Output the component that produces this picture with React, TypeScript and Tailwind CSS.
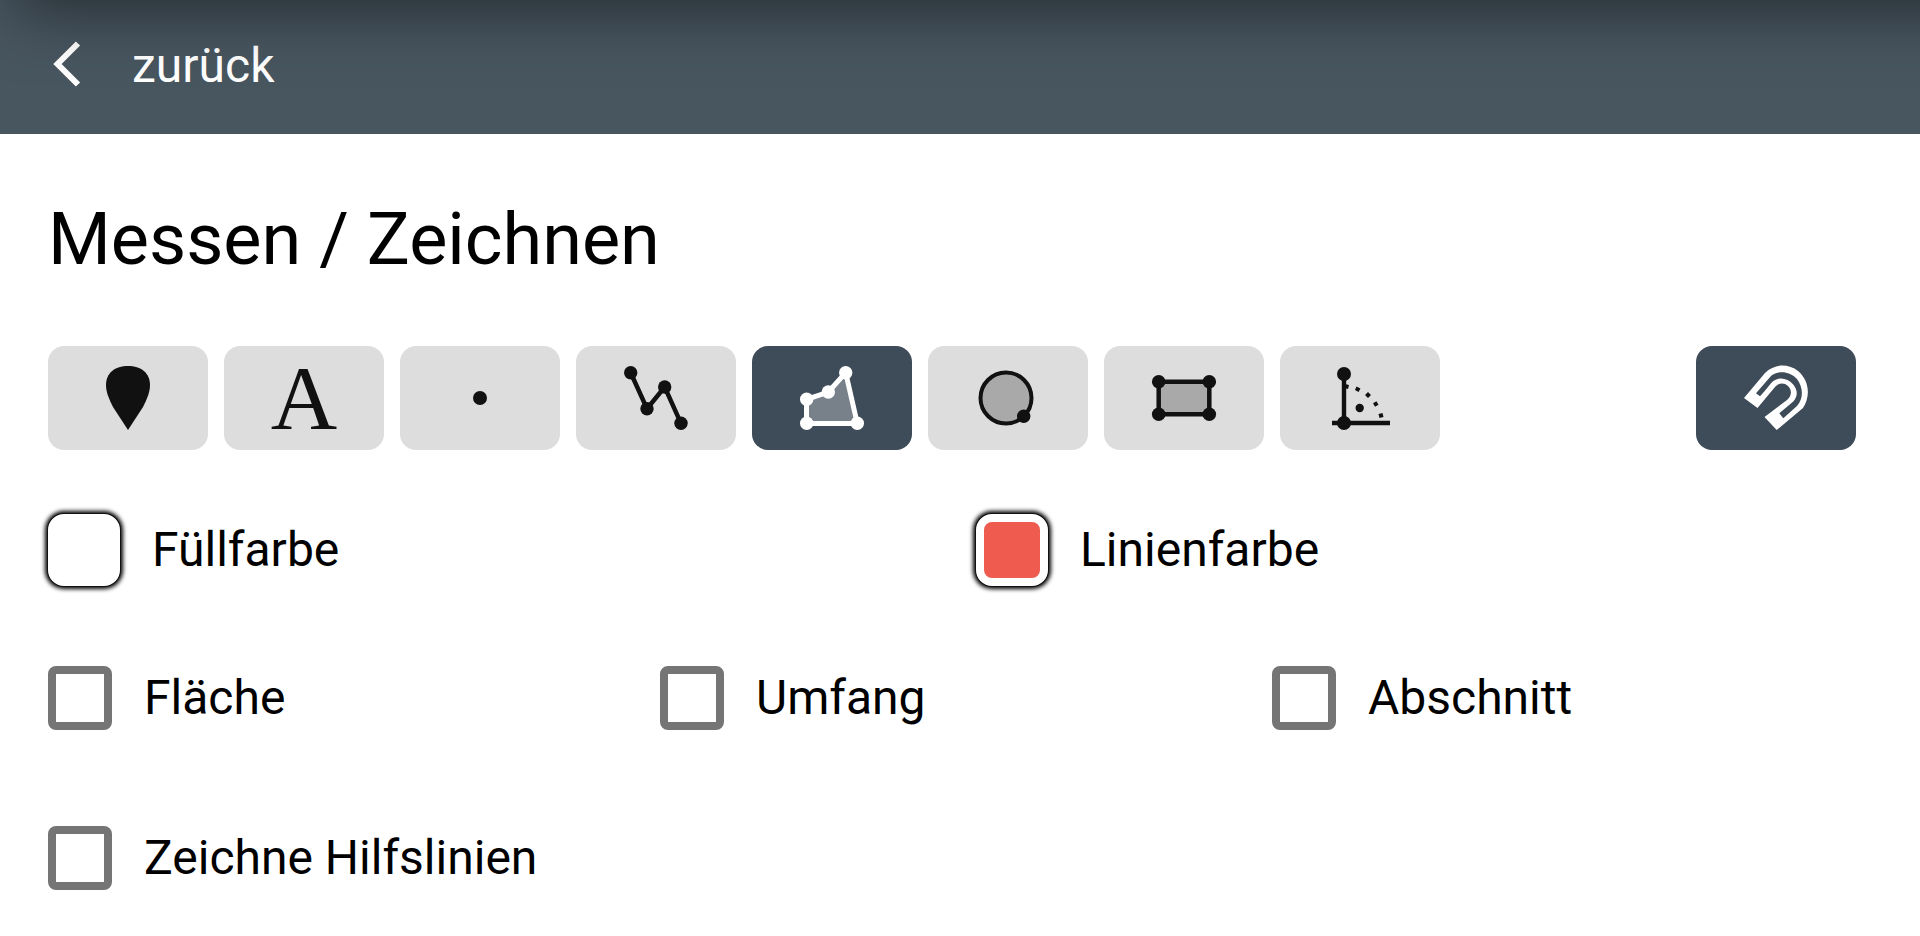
import { useState } from 'react';
import type { ReactNode } from 'react';

type Tool = { id: string; label: string; icon: ReactNode };

const TOOLS: Tool[] = [
  {
    id: 'marker',
    label: 'Marker',
    icon: <path fill="currentColor" d="M32 0C19 0 10 7 10 19c0 7 3 14 7 22l15 23 15-23c4-8 7-15 7-22C54 7 45 0 32 0z" />,
  },
  {
    id: 'text',
    label: 'Text',
    icon: (
      <text x="32" y="63" textAnchor="middle" fill="currentColor"
        className="font-['Liberation_Serif',serif] text-[92px]">A</text>
    ),
  },
  {
    id: 'point',
    label: 'Punkt',
    icon: <circle cx="32" cy="32" r="7" fill="currentColor" />,
  },
  {
    id: 'line',
    label: 'Linie',
    icon: (
      <g fill="currentColor">
        <path d="M6.7 6.7 23 42.7 40.7 21 57 57.3" fill="none" stroke="currentColor" strokeWidth="4.5" />
        <circle cx="6.7" cy="6.7" r="6.7" />
        <circle cx="23" cy="42.7" r="6.7" />
        <circle cx="40.7" cy="21" r="6.7" />
        <circle cx="57" cy="57.3" r="6.7" />
      </g>
    ),
  },
  {
    id: 'polygon',
    label: 'Polygon',
    icon: (
      <g fill="currentColor">
        <path d="M6.5 33.3 28.3 26 45.7 6.7 57.3 57.5H6.5z" fillOpacity=".3" stroke="currentColor" strokeWidth="5" />
        <circle cx="6.7" cy="33.3" r="6.7" />
        <circle cx="28.3" cy="26" r="6.7" />
        <circle cx="45.7" cy="6.7" r="6.7" />
        <circle cx="57.3" cy="57.3" r="6.7" />
        <circle cx="6.7" cy="57.3" r="6.7" />
      </g>
    ),
  },
  {
    id: 'circle',
    label: 'Kreis',
    icon: (
      <g fill="currentColor">
        <circle cx="30" cy="32" r="25.5" fillOpacity=".25" stroke="currentColor" strokeWidth="4" />
        <circle cx="47.7" cy="50.3" r="6.7" />
      </g>
    ),
  },
  {
    id: 'rect',
    label: 'Rechteck',
    icon: (
      <g fill="currentColor">
        <path d="M6.7 15.7h50.6v32.6H6.7z" fillOpacity=".25" stroke="currentColor" strokeWidth="4.5" />
        <circle cx="6.7" cy="15.7" r="6.8" />
        <circle cx="57.3" cy="15.7" r="6.8" />
        <circle cx="57.3" cy="48.3" r="6.8" />
        <circle cx="6.7" cy="48.3" r="6.8" />
      </g>
    ),
  },
  {
    id: 'angle',
    label: 'Orthogonal',
    icon: (
      <g fill="currentColor">
        <path d="M16 8v49M4 57h58" fill="none" stroke="currentColor" strokeWidth="4.4" />
        <circle cx="16" cy="8" r="7" />
        <circle cx="16" cy="57" r="7" />
        <circle cx="31.7" cy="42" r="4.2" />
        <path
          d="m17 18 4 1-1 4-4-1zM28.5 20.5l4 2-2 3.5-3.5-2zM40 26l3 3-3 3-3-3zM48.5 35.2l2 3.5-3.5 2-2-3.5zM54.5 47l1 4-4 1-1-4z"
        />
      </g>
    ),
  },
];

const MAGNET = (
  <path
    fill="currentColor"
    fillRule="evenodd"
    d="M0 32 21 7C31-3 45-2 54 5c11 9 13 25 5 37L32.7 64 20.5 51 43 34c5-4 5-10 1-14-4-4-10-3-13 1L13.5 42zM12 27.3l4 3 4.5-5 6.5-8c6-7 16-6 22 1 5 6 5 12 0 17.5L35.3 47.3l4 5L53 40c7-8 6-19 0-27-7-8-19-9-26-3z"
  />
);

function ToolButton({ label, active, onClick, children }: {
  label: string; active: boolean; onClick: () => void; children: ReactNode;
}) {
  return (
    <button
      type="button"
      aria-label={label}
      aria-pressed={active}
      onClick={onClick}
      className={`flex h-26 w-40 items-center justify-center rounded-2xl ${
        active ? 'bg-[#3e4b58] text-white' : 'bg-[#ddd] text-[#111]'}`}
    >
      <svg viewBox="0 0 64 64" className="size-16 overflow-visible">{children}</svg>
    </button>
  );
}

function ColorField({ id, label, swatch }: { id: string; label: string; swatch: string }) {
  return (
    <div className="flex items-center gap-8">
      <button
        id={id}
        type="button"
        className={`size-18 rounded-2xl border-8 border-white shadow-[0_0_0_1px_#111,0_0_4px_3px_#000] ${swatch}`}
      />
      <label htmlFor={id}>{label}</label>
    </div>
  );
}

function Check({ label }: { label: string }) {
  return (
    <label className="flex items-center gap-8">
      <input
        type="checkbox"
        className="size-16 shrink-0 appearance-none rounded-lg border-8 border-[#757575] bg-white checked:bg-[#757575]"
      />
      {label}
    </label>
  );
}

export default function App() {
  const [tool, setTool] = useState('polygon');
  const [snap, setSnap] = useState(true);

  return (
    <div className="min-h-screen bg-white font-[Roboto,sans-serif] text-[48px] leading-16 text-black">
      <header className="relative overflow-hidden bg-[#485660] px-12 pt-[34px] pb-9">
        <button type="button" className="flex items-center gap-[46px] text-white">
          <svg viewBox="0 0 38 64" className="h-16 w-[38px]" fill="none" stroke="currentColor" strokeWidth="6">
            <path d="M30 9.5 9.500 30 30 50.5" />
          </svg>
          zurück
        </button>
        {/* shadow cast by the bar above */}
        <div className="pointer-events-none absolute -top-32 -right-32 left-4 h-32 shadow-[0_10px_64px_rgba(0,0,0,0.5)]" />
      </header>

      <main className="pt-[66px] pr-16 pb-12 pl-12">
        <h1 className="text-[72px] leading-20">Messen / Zeichnen</h1>

        <div className="mt-[66px] flex justify-between">
          <div className="flex gap-4">
            {TOOLS.map(t => (
              <ToolButton key={t.id} label={t.label} active={tool === t.id} onClick={() => setTool(t.id)}>
                {t.icon}
              </ToolButton>
            ))}
          </div>
          <ToolButton label="Einrasten" active={snap} onClick={() => setSnap(!snap)}>
            {MAGNET}
          </ToolButton>
        </div>

        <div className="mt-16 grid grid-cols-2 gap-12">
          <ColorField id="fill-color" label="Füllfarbe" swatch="bg-white" />
          <ColorField id="line-color" label="Linienfarbe" swatch="bg-[#ef5b4f]" />
        </div>

        <div className="mt-20 grid grid-cols-3 gap-x-7 gap-y-24">
          <Check label="Fläche" />
          <Check label="Umfang" />
          <Check label="Abschnitt" />
          <Check label="Zeichne Hilfslinien" />
        </div>
      </main>
    </div>
  );
}
